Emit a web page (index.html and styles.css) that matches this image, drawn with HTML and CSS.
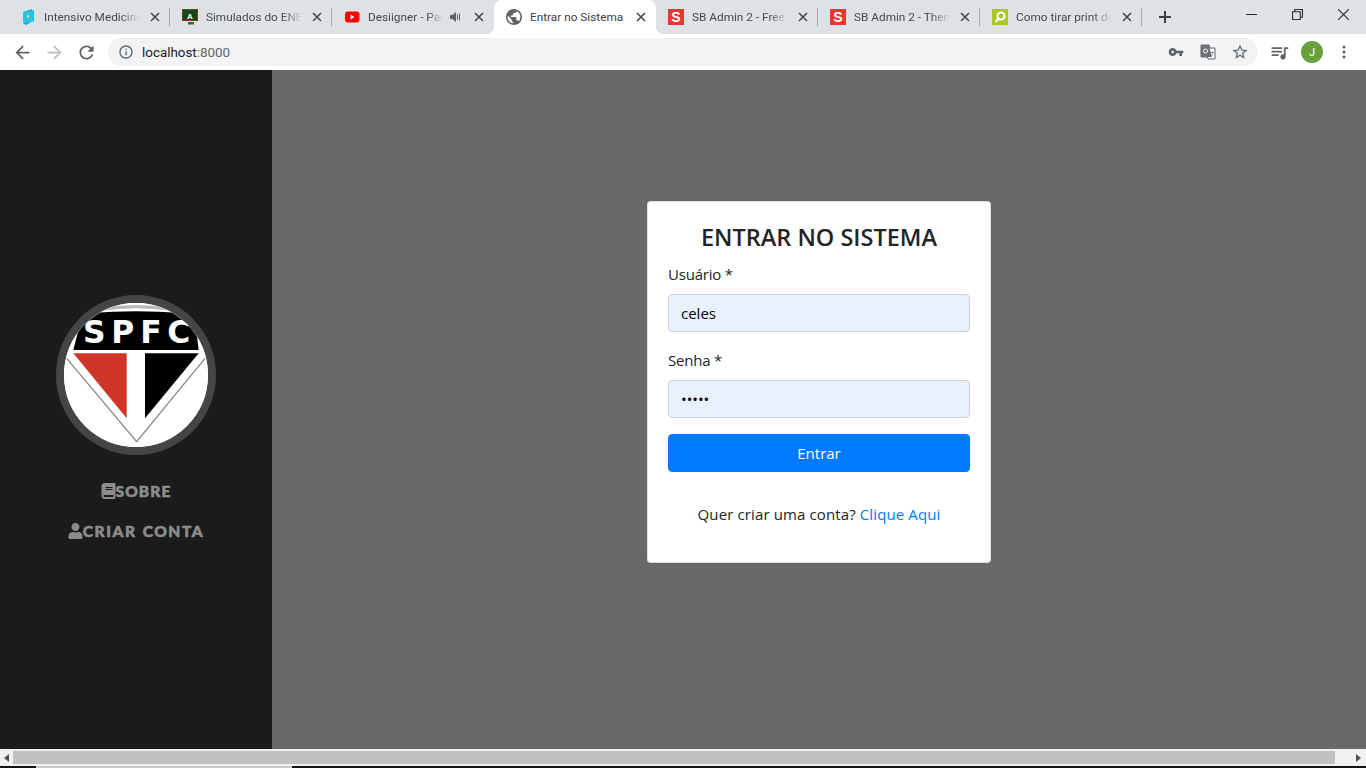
FILE: index.html
```html
<!DOCTYPE html>
<html lang="pt-BR">
<head>
<meta charset="utf-8">
<title>Entrar no Sistema</title>
<link rel="stylesheet" href="styles.css">
</head>
<body>
<div class="app">
  <header class="tabstrip">
    <div class="tab sep">
      <svg class="favicon" viewBox="0 0 16 16"><path d="M3 3 12 0v12.500L6 16l-3-2z" fill="#14a9cc"/><path d="M3 3 14 1v11.500L3 14z" fill="#23c4e6"/><path d="M7 5.500 10 7.200 7 9z" fill="#f2e34c"/></svg>
      <span class="tab-title">Intensivo Medicina</span>
      <svg class="close" viewBox="0 0 10 10"><path d="M1 1l8 8M9 1l-8 8"/></svg>
    </div>
    <div class="tab sep">
      <svg class="favicon" viewBox="0 0 16 16"><path d="M0 0h16v12H0z" fill="#7a3a12"/><path d="M1 1h14v10H1z" fill="#0c4a1c"/><path d="M6 13h6v2.500H6z" fill="#2f6b2c"/><text x="8" y="9.500" class="fav-letter">A</text></svg>
      <span class="tab-title">Simulados do ENEM</span>
      <svg class="close" viewBox="0 0 10 10"><path d="M1 1l8 8M9 1l-8 8"/></svg>
    </div>
    <div class="tab">
      <svg class="favicon" viewBox="0 0 16 16"><rect x="1" y="2.500" width="14.500" height="11" rx="3" fill="#f00"/><path d="M6.500 5.500 10.500 8l-4 2.500z" fill="#fff"/></svg>
      <span class="tab-title tab-title-short">Desiigner - Panda</span>
      <svg class="speaker" viewBox="0 0 12 12"><path d="M0 4h2.500L6 1v10L2.500 8H0z" fill="#5f6368"/><path d="M7.500 3.500v5M9.500 2.500v7" stroke="#5f6368" fill="none"/></svg>
      <svg class="close" viewBox="0 0 10 10"><path d="M1 1l8 8M9 1l-8 8"/></svg>
    </div>
    <div class="tab tab-active">
      <svg class="favicon" viewBox="2 2 20 20"><path fill="#5f6368" d="M12 2C6.480 2 2 6.480 2 12s4.480 10 10 10 10-4.480 10-10S17.520 2 12 2zm-1 17.930c-3.950-.490-7-3.850-7-7.930 0-.620.080-1.210.210-1.790L9 15v1c0 1.100.9 2 2 2v1.930zm6.900-2.540c-.260-.810-1-1.390-1.900-1.390h-1v-3c0-.550-.450-1-1-1H8v-2h2c.550 0 1-.450 1-1V7h2c1.100 0 2-.9 2-2v-.410c2.930 1.190 5 4.060 5 7.410 0 2.080-.8 3.970-2.100 5.390z"/></svg>
      <span class="tab-title tab-title-full">Entrar no Sistema</span>
      <svg class="close" viewBox="0 0 10 10"><path d="M1 1l8 8M9 1l-8 8"/></svg>
    </div>
    <div class="tab sep">
      <span class="favicon fav-s">S</span>
      <span class="tab-title">SB Admin 2 - Free</span>
      <svg class="close" viewBox="0 0 10 10"><path d="M1 1l8 8M9 1l-8 8"/></svg>
    </div>
    <div class="tab sep">
      <span class="favicon fav-s">S</span>
      <span class="tab-title">SB Admin 2 - Theme</span>
      <svg class="close" viewBox="0 0 10 10"><path d="M1 1l8 8M9 1l-8 8"/></svg>
    </div>
    <div class="tab sep">
      <svg class="favicon" viewBox="0 0 16 16"><rect width="16" height="16" fill="#a8c829"/><circle cx="9" cy="7" r="3.500" fill="none" stroke="#fff" stroke-width="2"/><path d="M6.500 9.500 3.500 13" stroke="#fff" stroke-width="2"/></svg>
      <span class="tab-title">Como tirar print do</span>
      <svg class="close" viewBox="0 0 10 10"><path d="M1 1l8 8M9 1l-8 8"/></svg>
    </div>
    <svg class="newtab" viewBox="0 0 12 12"><path d="M6 0v12M0 6h12"/></svg>
    <div class="winctl">
      <div class="winbtn"><svg viewBox="0 0 11 11"><path d="M0 5.500h11"/></svg></div>
      <div class="winbtn"><svg viewBox="0 0 10 10"><path d="M.5 2.500h7v7h-7zM2.500 2.500v-2h7v7h-2"/></svg></div>
      <div class="winbtn"><svg viewBox="0 0 10 10"><path d="M0 0l10 10M10 0L0 10"/></svg></div>
    </div>
  </header>

  <nav class="toolbar">
    <div class="tb-btn"><svg class="ic21" viewBox="0 0 24 24"><path d="M20 11H7.830l5.590-5.590L12 4l-8 8 8 8 1.410-1.410L7.830 13H20v-2z"/></svg></div>
    <div class="tb-btn tb-disabled"><svg class="ic21" viewBox="0 0 24 24"><path d="M12 4l-1.410 1.410L16.170 11H4v2h12.170l-5.580 5.590L12 20l8-8z"/></svg></div>
    <div class="tb-btn"><svg class="ic21" viewBox="0 0 24 24"><path d="M17.650 6.350C16.200 4.900 14.210 4 12 4c-4.420 0-7.990 3.580-7.990 8s3.570 8 7.990 8c3.730 0 6.840-2.550 7.730-6h-2.080c-.82 2.330-3.040 4-5.650 4-3.310 0-6-2.690-6-6s2.690-6 6-6c1.660 0 3.140.69 4.220 1.780L13 11h7V4l-2.350 2.350z"/></svg></div>
    <div class="omnibox">
      <svg class="ic16" viewBox="0 0 24 24"><path d="M11 7h2v2h-2zm0 4h2v6h-2zm1-9C6.480 2 2 6.480 2 12s4.480 10 10 10 10-4.480 10-10S17.520 2 12 2zm0 18c-4.410 0-8-3.590-8-8s3.590-8 8-8 8 3.590 8 8-3.590 8-8 8z"/></svg>
      <span class="url">localhost<span class="url-port">:8000</span></span>
      <div class="omni-icons">
        <div class="tb-btn"><svg class="ic16" viewBox="0 0 24 24"><path d="M12.650 10C11.830 7.670 9.610 6 7 6c-3.310 0-6 2.690-6 6s2.690 6 6 6c2.610 0 4.830-1.670 5.650-4H17v4h4v-4h2v-4H12.650zM7 14c-1.100 0-2-.9-2-2s.9-2 2-2 2 .9 2 2-.9 2-2 2z"/></svg></div>
        <div class="tb-btn"><svg class="ic16" viewBox="0 0 16 16"><path d="M1 1h8l1 3h5v11H8l-.6-2H1z" fill="#fff" stroke="#5f6368"/><path d="M1 1h8l2.800 12H1z" fill="#6d7175"/><circle cx="5.500" cy="7" r="2" fill="none" stroke="#fff"/><path d="M10.500 8.500h3M12 7.500v1M11 12c1.500-.8 2-2 2.200-3.500" stroke="#5f6368" fill="none" stroke-width=".8"/></svg></div>
        <div class="tb-btn"><svg class="ic18" viewBox="0 0 24 24"><path d="M22 9.240l-7.190-.62L12 2 9.190 8.630 2 9.240l5.460 4.730L5.820 21 12 17.270 18.180 21l-1.630-7.030L22 9.240zM12 15.400l-3.760 2.270 1-4.280-3.320-2.880 4.380-.38L12 6.100l1.710 4.040 4.380.38-3.320 2.880 1 4.280L12 15.400z"/></svg></div>
      </div>
    </div>
    <div class="tb-btn tb-queue"><svg class="ic21" viewBox="0 0 24 24"><path d="M15 6H3v2h12V6zm0 4H3v2h12v-2zM3 16h8v-2H3v2zM17 6v8.180c-.31-.11-.65-.18-1-.18-1.660 0-3 1.340-3 3s1.340 3 3 3 3-1.340 3-3V8h3V6h-5z"/></svg></div>
    <div class="avatar">J</div>
    <div class="tb-btn tb-menu"><svg class="ic16" viewBox="0 0 16 16"><circle cx="8" cy="3" r="1.500"/><circle cx="8" cy="8" r="1.500"/><circle cx="8" cy="13" r="1.500"/></svg></div>
  </nav>

  <div class="page">
    <aside class="sidebar">
      <div class="logo">
        <svg viewBox="72 54 432 432" class="logo-svg">
          <rect x="72" y="54" width="432" height="432" fill="#fff"/>
          <path d="M185 68Q288 52 391 68L395 78Q288 62 181 78Z" fill="#b9b9b9"/>
          <path d="M100 195 124 100 150 84Q288 74 425 84L465 105 476 195Z" fill="#000"/>
          <text x="290" y="174" class="logo-text" textLength="322" lengthAdjust="spacing">SPFC</text>
          <path d="M80 220 290 470 495 220" fill="none" stroke="#8a8a8a" stroke-width="4"/>
          <path d="M100 205H260V400Z" fill="#cf3529"/>
          <path d="M315 205H476L315 400Z" fill="#000"/>
        </svg>
      </div>
      <a class="side-link" href="#">
        <svg class="side-ic" viewBox="0 0 448 512"><path d="M448 360V24c0-13.300-10.700-24-24-24H96C43 0 0 43 0 96v320c0 53 43 96 96 96h328c13.300 0 24-10.700 24-24v-16c0-7.500-3.500-14.300-8.900-18.700-4.200-15.400-4.200-59.300 0-74.700 5.400-4.300 8.900-11.100 8.900-18.600zM128 134c0-3.300 2.700-6 6-6h212c3.300 0 6 2.700 6 6v20c0 3.300-2.700 6-6 6H134c-3.300 0-6-2.700-6-6v-20zm0 64c0-3.300 2.700-6 6-6h212c3.300 0 6 2.700 6 6v20c0 3.300-2.700 6-6 6H134c-3.300 0-6-2.700-6-6v-20zm253.400 250H96c-17.700 0-32-14.300-32-32 0-17.600 14.400-32 32-32h285.400c-1.900 17.100-1.900 46.900 0 64z"/></svg>
        <span>SOBRE</span>
      </a>
      <a class="side-link side-link-wide" href="#">
        <svg class="side-ic" viewBox="0 0 448 512"><path d="M224 256c70.700 0 128-57.300 128-128S294.700 0 224 0 96 57.300 96 128s57.300 128 128 128zm89.600 32h-16.700c-22.200 10.200-46.900 16-72.900 16s-50.600-5.800-72.900-16h-16.700C60.200 288 0 348.200 0 422.400V464c0 26.500 21.500 48 48 48h352c26.500 0 48-21.500 48-48v-41.600c0-74.200-60.200-134.400-134.400-134.400z"/></svg>
        <span>CRIAR CONTA</span>
      </a>
    </aside>
    <main class="content">
      <form class="card">
        <h1 class="card-title">ENTRAR NO SISTEMA</h1>
        <label class="field-label" for="u">Usuário *</label>
        <input class="field" id="u" type="text" value="celes">
        <label class="field-label" for="s">Senha *</label>
        <input class="field" id="s" type="password" value="senha">
        <button class="submit" type="button">Entrar</button>
        <p class="signup">Quer criar uma conta? <a href="#">Clique Aqui</a></p>
      </form>
    </main>
  </div>

  <div class="hscroll">
    <svg class="sc-arrow" viewBox="0 0 6 8"><path d="M5 0v8L0 4z"/></svg>
    <div class="sc-thumb"></div>
    <svg class="sc-arrow sc-arrow-r" viewBox="0 0 6 8"><path d="M0 0v8l5-4z"/></svg>
  </div>
  <div class="bottom-strip"><div class="strip-item"></div></div>
</div>
</body>
</html>
```
FILE: styles.css
```css
* { box-sizing: border-box; }
html, body { margin: 0; height: 100%; overflow: hidden; }
body { font-family: "Open Sans", "Noto Sans", sans-serif; color: #212529; }
svg { display: block; flex: none; }

.app { display: flex; flex-direction: column; height: 768px; }

/* tab strip */
.tabstrip { display: flex; align-items: stretch; height: 34px; flex: none; padding-left: 8px; background: #dee1e6; font-family: Roboto, "Open Sans", sans-serif; }
.tab { position: relative; display: flex; align-items: center; flex: none; width: 162px; padding: 0 7px 0 12px; font-size: 11.800px; color: #45484c; }
.tab.sep::after { content: ""; position: absolute; right: 0; top: 8px; width: 1px; height: 18px; background: #a3a6aa; }
.tab-active { background: #fff; border-radius: 8px 8px 0 0; color: #3c4043; }
.tab-active::before, .tab-active::after { content: ""; position: absolute; bottom: 0; width: 8px; height: 8px; }
.tab-active::before { left: -8px; background: radial-gradient(circle at 0 0, transparent 8px, #fff 8.500px); }
.tab-active::after { right: -8px; background: radial-gradient(circle at 100% 0, transparent 8px, #fff 8.500px); }
.favicon { width: 16px; height: 16px; margin-right: 8px; flex: none; }
.fav-letter { font: 700 8px "Liberation Sans", sans-serif; fill: #fff; text-anchor: middle; }
.fav-s { display: flex; align-items: center; justify-content: center; background: #e23a2e; color: #fff; font: 700 14px "Liberation Sans", sans-serif; }
.tab-title { flex: 1; min-width: 0; white-space: nowrap; overflow: hidden; -webkit-mask-image: linear-gradient(90deg, #000 78%, transparent 98%); mask-image: linear-gradient(90deg, #000 78%, transparent 98%); margin-right: 5px; }
.tab-title-short { margin-right: 6px; }
.tab-title-full { -webkit-mask-image: none; mask-image: none; }
.speaker { width: 12px; height: 12px; margin-right: 9px; }
.close { width: 10px; height: 10px; margin: 0 3px; fill: none; stroke: #44474b; stroke-width: 1.600; }
.newtab { width: 12px; height: 12px; margin: 11px 0 0 17px; fill: none; stroke: #3c4043; stroke-width: 2; }
.winctl { display: flex; margin-left: auto; height: 29px; }
.winbtn { width: 46px; display: flex; align-items: center; justify-content: center; }
.winbtn svg { width: 11px; height: 11px; fill: none; stroke: #2b2b2b; stroke-width: 1; }

/* toolbar */
.toolbar { display: flex; align-items: center; height: 36px; flex: none; padding-left: 6px; background: #fff; }
.tb-btn { display: flex; align-items: center; justify-content: center; width: 32px; height: 28px; flex: none; fill: #5f6368; }
.tb-disabled { fill: #bcbec1; }
.ic21 { width: 21px; height: 21px; }
.ic18 { width: 18px; height: 18px; }
.ic16 { width: 16px; height: 16px; }
.omnibox { display: flex; align-items: center; width: 1150px; height: 28px; margin-left: 6px; padding: 0 2px 0 10px; border-radius: 14px; background: #f1f3f4; fill: #5f6368; }
.url { margin-left: 8px; font: 13.400px Roboto, "Open Sans", sans-serif; color: #202124; }
.url-port { color: #5f6368; }
.omni-icons { display: flex; margin-left: auto; }
.tb-queue { margin-left: 5px; }
.avatar { display: flex; align-items: center; justify-content: center; width: 22px; height: 22px; margin-left: 6px; border-radius: 50%; background: #689f38; color: #e8f0d8; font: 500 11px Roboto, sans-serif; }
.tb-menu { margin-left: 5px; }

/* page */
.page { display: flex; flex: 1; min-height: 0; background: #696969; }
.sidebar { display: flex; flex-direction: column; align-items: center; flex: none; width: 272px; padding-top: 225px; background: #1b1b1b; }
.logo { width: 160px; height: 160px; margin-bottom: 20px; border: 8px solid #454545; border-radius: 50%; overflow: hidden; background: #fff; }
.logo-svg { width: 144px; height: 144px; }
.logo-text { font: 700 94px "DejaVu Sans", sans-serif; fill: #fff; text-anchor: middle; }
.side-link { display: flex; align-items: center; height: 32px; margin-bottom: 8px; color: #8c8c8c; fill: #8c8c8c; font: 900 15.500px Lato, "Open Sans", sans-serif; letter-spacing: 1.100px; -webkit-text-stroke: .6px #8c8c8c; text-decoration: none; }
.side-link-wide { word-spacing: 1px; letter-spacing: 1.550px; }
.side-ic { width: 15px; height: 16px; }

.content { flex: 1; display: flex; justify-content: center; align-items: flex-start; padding-top: 131px; }
.card { display: flex; flex-direction: column; width: 344px; height: 362px; padding: 21px 20px 0; background: #fff; border: 1px solid rgba(0, 0, 0, .125); border-radius: 4px; }
.card-title { margin: 0 0 10px; font-size: 23.500px; line-height: 29px; font-weight: 600; text-align: center; color: #212529; }
.field-label { font-size: 15px; line-height: 24px; margin-bottom: 8px; letter-spacing: -.2px; color: #212529; }
.field { width: 100%; height: 38px; margin-bottom: 16px; padding: 6px 12px; border: 1px solid #ced4da; border-radius: 4px; background: #e8f0fe; color: #000; font: 15px "Open Sans", sans-serif; outline: none; }
.submit { height: 38px; border: 1px solid #007bff; border-radius: 4px; background: #007bff; color: #fff; font: 15px "Open Sans", sans-serif; }
.signup { margin: 30px 0 0; font-size: 15px; line-height: 24px; letter-spacing: .12px; text-align: center; }
.signup a { color: #007bff; text-decoration: none; }

/* scrollbar */
.hscroll { display: flex; align-items: center; height: 17px; flex: none; padding: 2px 0; background: #f1f1f1; }
.sc-arrow { width: 6px; height: 8px; margin: 0 3px 0 4px; fill: #505050; }
.sc-thumb { width: 1322px; height: 13px; background: #c1c1c1; }
.sc-arrow-r { margin: 0 0 0 21px; }
.bottom-strip { height: 2px; flex: none; padding-left: 36px; background: #141414; }
.strip-item { width: 256px; height: 2px; background: #c9c9c9; }
```
